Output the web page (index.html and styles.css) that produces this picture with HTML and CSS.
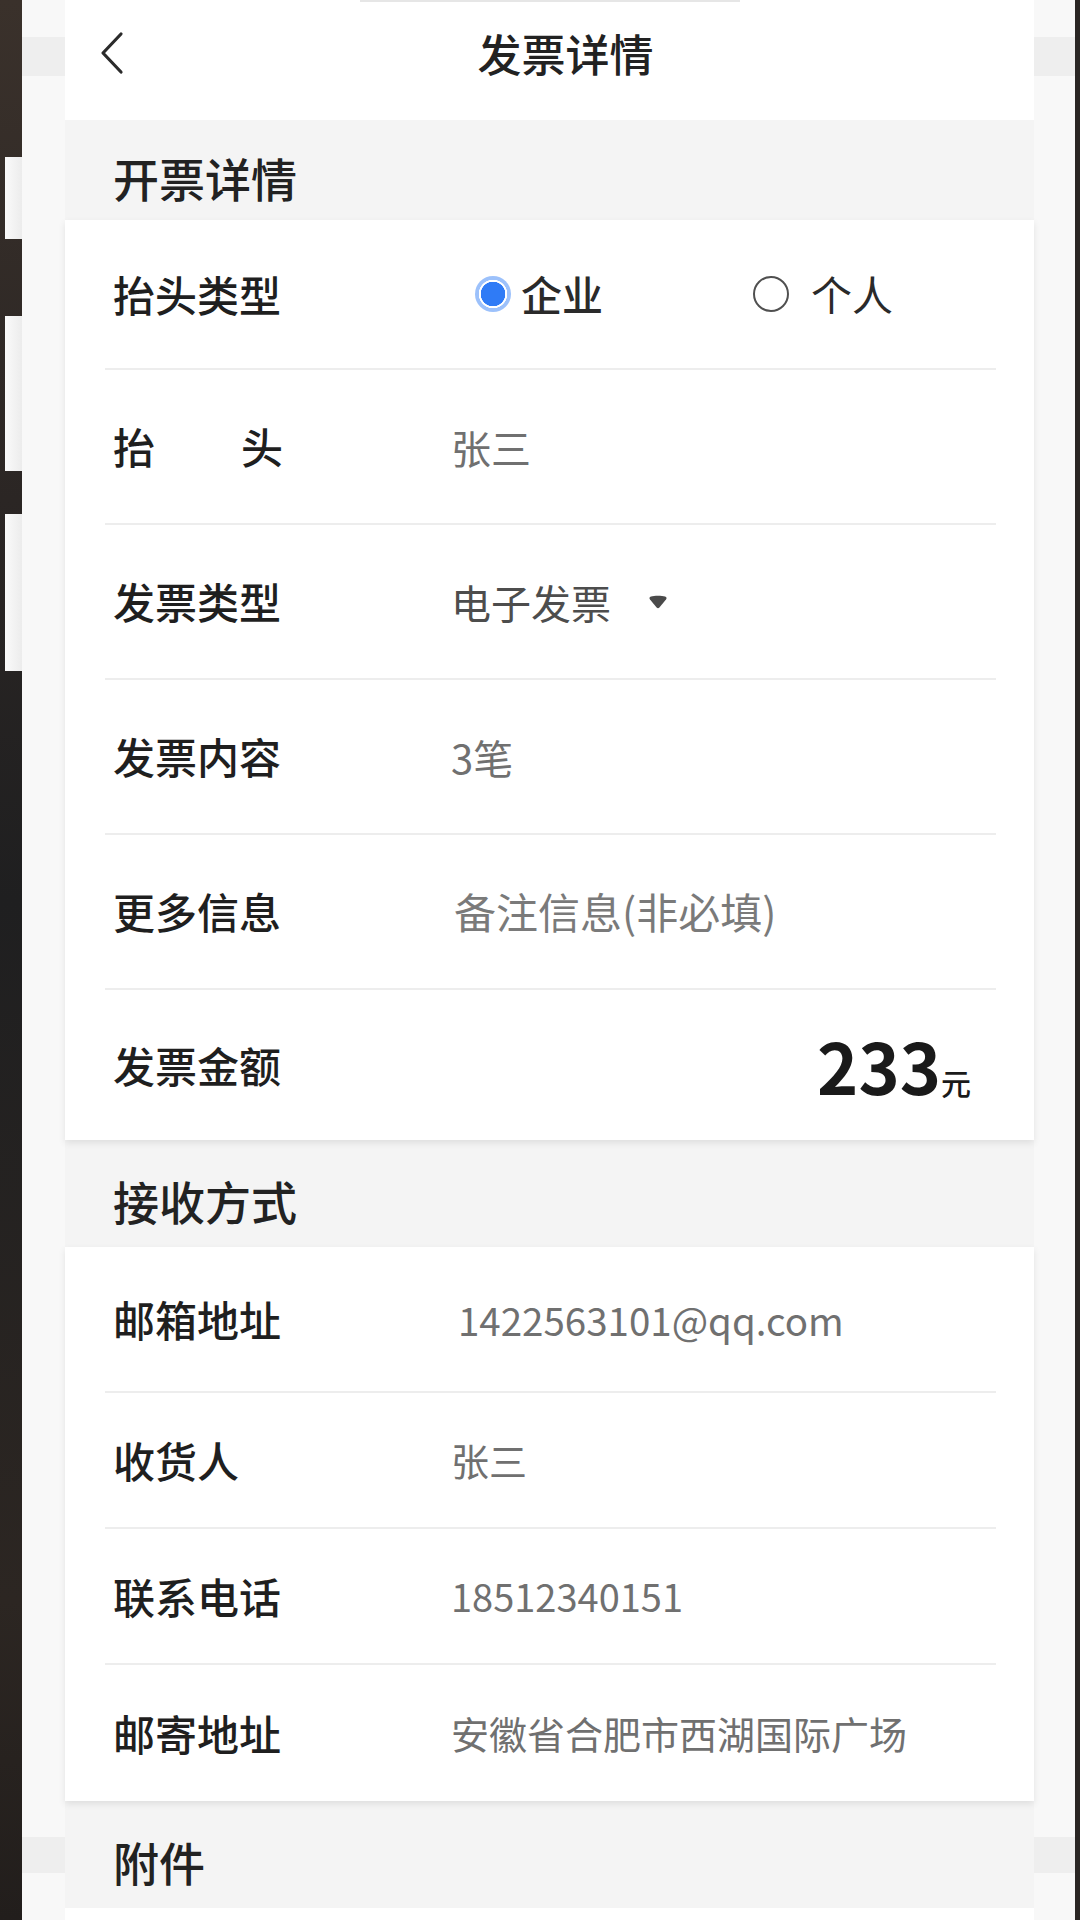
FILE: index.html
```html
<!DOCTYPE html>
<html lang="zh-CN">
<head>
<meta charset="utf-8">
<title>发票详情</title>
<link rel="stylesheet" href="styles.css">
</head>
<body>
<div class="frame">
  <div class="bezel-left">
    <div class="tab tab-1"></div>
    <div class="tab tab-2"></div>
    <div class="tab tab-3"></div>
  </div>
  <div class="strip"></div>
  <main class="screen">
    <header class="nav">
      <div class="nav-back">
        <svg width="26" height="44" viewBox="0 0 26 44" aria-hidden="true"><polyline points="22,3 4,22 22,41" fill="none" stroke="#2b2b2b" stroke-width="3.2" stroke-linecap="round" stroke-linejoin="round"/></svg>
      </div>
      <h1 class="nav-title">发票详情</h1>
      <div class="nav-side"></div>
    </header>

    <div class="section-title section-first">开票详情</div>
    <div class="card card-invoice">
      <div class="row">
        <span class="label">抬头类型</span>
        <div class="radios">
          <span class="radio radio-on"></span><span class="radio-text radio-text-on">企业</span>
          <span class="radio radio-off"></span><span class="radio-text">个人</span>
        </div>
      </div>
      <div class="row">
        <span class="label label-justify"><span>抬</span><span>头</span></span>
        <span class="value">张三</span>
      </div>
      <div class="row">
        <span class="label">发票类型</span>
        <span class="value value-dark">电子发票</span>
        <svg class="caret" width="20" height="16" viewBox="0 0 20 16" aria-hidden="true"><path d="M3 2.5 C6 1.5 14 1.5 17 2.5 Q19.5 3.5 18 5.5 L11.4 13.4 Q10 15 8.6 13.4 L2 5.5 Q0.5 3.5 3 2.5 Z" fill="#4a4a4a"/></svg>
      </div>
      <div class="row">
        <span class="label">发票内容</span>
        <span class="value">3笔</span>
      </div>
      <div class="row">
        <span class="label">更多信息</span>
        <span class="value value-placeholder">备注信息(非必填)</span>
      </div>
      <div class="row row-amount">
        <span class="label">发票金额</span>
        <span class="amount"><span class="amount-num">233</span><span class="amount-unit">元</span></span>
      </div>
    </div>

    <div class="section-title">接收方式</div>
    <div class="card card-receive">
      <div class="row">
        <span class="label">邮箱地址</span>
        <span class="value value-email">1422563101@qq.com</span>
      </div>
      <div class="row">
        <span class="label">收货人</span>
        <span class="value">张三</span>
      </div>
      <div class="row">
        <span class="label">联系电话</span>
        <span class="value">18512340151</span>
      </div>
      <div class="row">
        <span class="label">邮寄地址</span>
        <span class="value">安徽省合肥市西湖国际广场</span>
      </div>
    </div>

    <div class="section-title">附件</div>
    <div class="card card-attach"></div>
  </main>
  <div class="strip strip-right"></div>
  <div class="bezel-right"></div>
</div>
</body>
</html>
```

FILE: styles.css
```css
* {
  box-sizing: border-box;
}

html, body {
  margin: 0;
  padding: 0;
  background: #262220;
}

body {
  font-family: "Noto Sans CJK SC", "Noto Sans", sans-serif;
  color: #1f1f1f;
}

.frame {
  width: 1080px;
  height: 1920px;
  display: flex;
  overflow: hidden;
}

/* phone bezel and side strips */
.bezel-left {
  flex: none;
  width: 22px;
  display: flex;
  flex-direction: column;
  background: linear-gradient(to bottom, #3a312b 0, #2b2624 500px, #1f1f20 900px, #2c2622 1600px, #221e1c 1920px);
}

.tab {
  margin-left: 5px;
  width: 17px;
  background: linear-gradient(to right, #fafafa, #ececec);
}

.tab-1 { margin-top: 157px; height: 82px; }
.tab-2 { margin-top: 77px; height: 155px; }
.tab-3 { margin-top: 43px; height: 157px; }

.strip {
  flex: none;
  width: 43px;
  background: linear-gradient(to bottom,
    #f8f8f8 0, #f8f8f8 37px,
    #eeeeee 37px, #eeeeee 76px,
    #f8f8f8 76px, #f8f8f8 1837px,
    #eeeeee 1837px, #eeeeee 1873px,
    #f8f8f8 1873px);
}

.strip-right {
  width: 41px;
}

.bezel-right {
  flex: none;
  width: 5px;
  background: #2a2624;
}

/* screen */
.screen {
  flex: none;
  width: 969px;
  display: flex;
  flex-direction: column;
  background: #f4f4f4;
}

.nav {
  flex: none;
  height: 120px;
  padding: 0 0 14px 32px;
  display: grid;
  grid-template-columns: 1fr auto 1fr;
  align-items: center;
  background: linear-gradient(#e6e6e6, #e6e6e6) no-repeat 295px 0 / 380px 2px, #ffffff;
}

.nav-back {
  display: flex;
  align-items: center;
  margin-left: 2px;
}

.nav-back svg {
  display: block;
}

.nav-title {
  margin: 0;
  font-size: 44px;
  font-weight: 500;
  line-height: 1.2;
  color: #222222;
}

.section-title {
  flex: none;
  height: 107px;
  padding: 15px 0 0 48px;
  display: flex;
  align-items: center;
  font-size: 46px;
  font-weight: 500;
  line-height: 1.2;
  color: #222222;
  background: #f4f4f4;
}

.section-first {
  height: 100px;
  padding-top: 16px;
}

.card {
  flex: none;
  position: relative;
  z-index: 1;
  background: #ffffff;
  box-shadow: 0 3px 7px rgba(0, 0, 0, 0.09);
}

.card-attach {
  flex: 1;
  box-shadow: none;
}

.row {
  height: 155px;
  margin: 0 38px 0 40px;
  padding-left: 8px;
  display: flex;
  align-items: center;
  border-bottom: 2px solid #ededed;
  line-height: 1.2;
}

.row:first-child {
  height: 150px;
}

.row:last-child {
  border-bottom: none;
}

.card-receive .row {
  height: 136px;
}

.card-receive .row:first-child {
  height: 146px;
}

.label {
  flex: none;
  width: 338px;
  font-size: 42px;
  font-weight: 500;
  color: #1f1f1f;
}

.label-justify {
  display: flex;
  justify-content: space-between;
  width: 170px;
  margin-right: 168px;
}

.value {
  font-size: 40px;
  color: #707070;
}

.value-dark {
  color: #4d4d4d;
}

.value-placeholder {
  color: #7a7a7a;
  padding-left: 3px;
  font-size: 42px;
}

.card-receive .value {
  font-size: 38px;
}

.card-receive .value-email {
  padding-left: 7px;
  font-size: 38.5px;
}

.caret {
  margin-left: 37px;
  display: block;
}

/* radio */
.radios {
  display: flex;
  align-items: center;
  margin-left: 24px;
}

.radio {
  flex: none;
  width: 36px;
  height: 36px;
  border-radius: 50%;
}

.radio-on {
  background: radial-gradient(circle, #2f7bf6 0, #2f7bf6 12px, #ffffff 12.5px, #ffffff 14px, #9cc1fb 14.5px, #9cc1fb 18px);
}

.radio-off {
  margin-left: 150px;
  border: 2.5px solid #505050;
}

.radio-text {
  margin-left: 22px;
  font-size: 41px;
  font-weight: 400;
  color: #2a2a2a;
}

.radio-text-on {
  margin-left: 10px;
  font-weight: 500;
}

/* amount */
.row-amount {
  height: 150px;
}

.amount {
  margin-left: auto;
  padding-right: 25px;
  display: flex;
  align-items: baseline;
  color: #1a1a1a;
}

.amount-num {
  font-size: 70px;
  font-weight: 700;
  line-height: 1;
}

.amount-unit {
  font-size: 30px;
  font-weight: 500;
  line-height: 1;
}
```
